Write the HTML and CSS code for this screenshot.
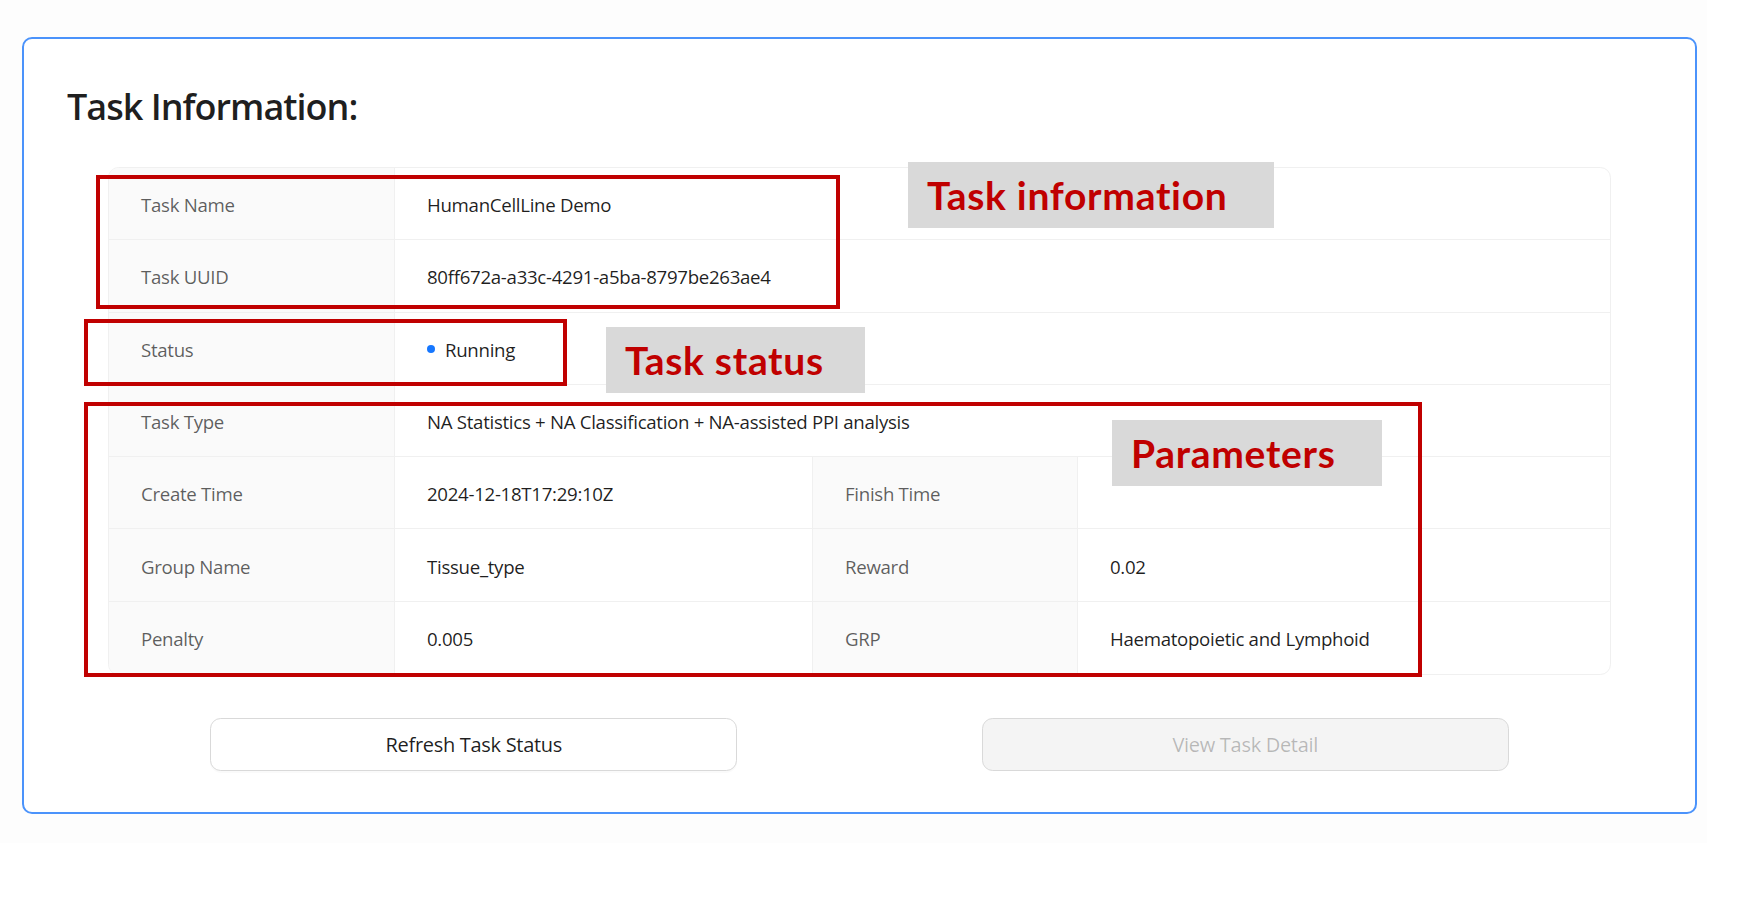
FILE: index.html
```html
<!DOCTYPE html>
<html lang="en">
<head>
<meta charset="utf-8">
<title>Task Information</title>
<link rel="stylesheet" href="styles.css">
</head>
<body>
<div class="page">
  <section class="card">
    <h2 class="title">Task Information:</h2>
    <div class="body">
      <div class="desc">
        <div class="cell label">Task Name</div>
        <div class="cell value span3 last">HumanCellLine Demo</div>
        <div class="cell label">Task UUID</div>
        <div class="cell value span3 last">80ff672a-a33c-4291-a5ba-8797be263ae4</div>
        <div class="cell label">Status</div>
        <div class="cell value span3 last"><span class="dot"></span>Running</div>
        <div class="cell label">Task Type</div>
        <div class="cell value span3 last">NA Statistics + NA Classification + NA-assisted PPI analysis</div>
        <div class="cell label">Create Time</div>
        <div class="cell value">2024-12-18T17:29:10Z</div>
        <div class="cell label">Finish Time</div>
        <div class="cell value last"></div>
        <div class="cell label">Group Name</div>
        <div class="cell value">Tissue_type</div>
        <div class="cell label">Reward</div>
        <div class="cell value last">0.02</div>
        <div class="cell label bottom">Penalty</div>
        <div class="cell value bottom">0.005</div>
        <div class="cell label bottom">GRP</div>
        <div class="cell value bottom last">Haematopoietic and Lymphoid</div>
      </div>
      <div class="actions">
        <div class="col"><button class="btn" type="button">Refresh Task Status</button></div>
        <div class="col"><button class="btn btn-disabled" type="button" disabled>View Task Detail</button></div>
      </div>
    </div>
  </section>

  <div class="mark mark-info"></div>
  <div class="mark mark-status"></div>
  <div class="mark mark-params"></div>
  <div class="tag tag-info">Task information</div>
  <div class="tag tag-status">Task status</div>
  <div class="tag tag-params">Parameters</div>
</div>
</body>
</html>
```

FILE: styles.css
```css
* { box-sizing: border-box; }

html, body {
  margin: 0;
  padding: 0;
  background: #ffffff;
}

body {
  font-family: "Open Sans", "Noto Sans", sans-serif;
  color: rgba(0, 0, 0, 0.88);
}

.page {
  position: relative;
  width: 1707px;
  height: 843px;
  padding: 37px 0 0 22px;
  background: #fdfdfd;
}

.card {
  width: 1675px;
  border: 2px solid #4b93fb;
  border-radius: 10px;
  background: #ffffff;
  padding: 44px 43px 41px 43px;
}

.title {
  margin: 0;
  font-size: 36px;
  line-height: 48px;
  font-weight: 600;
  letter-spacing: -1px;
  color: rgba(0, 0, 0, 0.88);
}

.body {
  margin: 36px 41px 0 41px;
}

.desc {
  display: grid;
  grid-template-columns: 286px 418px 265px 532px;
  grid-template-rows: repeat(7, 1fr);
  height: 508px;
  border: 1px solid #f0f0f0;
  border-radius: 10.67px;
  overflow: hidden;
}

.cell {
  display: flex;
  align-items: center;
  padding: 2px 32px 0 32px;
  font-size: 18.67px;
  letter-spacing: -0.3px;
  border-bottom: 1px solid #f0f0f0;
  border-right: 1px solid #f0f0f0;
  white-space: nowrap;
}

.cell.last { border-right: none; }
.cell.bottom { border-bottom: none; }

.span3 { grid-column: span 3; }

.label {
  background: #fafafa;
  color: rgba(0, 0, 0, 0.64);
}

.value {
  color: rgba(0, 0, 0, 0.88);
}

.dot {
  width: 8px;
  height: 8px;
  border-radius: 50%;
  background: #1677ff;
  margin-right: 10px;
  flex: none;
}

.actions {
  display: flex;
  margin: 43px -20px 0 -20px;
}

.col {
  flex: 1 1 0;
  display: flex;
  justify-content: center;
}

.btn {
  width: 527px;
  height: 53px;
  font-family: inherit;
  font-size: 20px;
  letter-spacing: -0.3px;
  color: rgba(0, 0, 0, 0.88);
  background: #ffffff;
  border: 1px solid #d9d9d9;
  border-radius: 10.67px;
  box-shadow: 0 2px 0 rgba(0, 0, 0, 0.02);
  padding: 0 20px;
}

.btn-disabled {
  background: #f4f4f4;
  color: rgba(0, 0, 0, 0.25);
  box-shadow: none;
}

/* annotation overlays */
.mark {
  position: absolute;
  border: 4px solid #c00000;
}

.mark-info   { left: 96px;  top: 175px; width: 744px;  height: 134px; }
.mark-status { left: 84px;  top: 319px; width: 483px;  height: 67px; }
.mark-params { left: 84px;  top: 402px; width: 1338px; height: 275px; }

.tag {
  position: absolute;
  height: 66px;
  line-height: 66px;
  padding-left: 19px;
  background: #d9d9d9;
  color: #c00000;
  font-family: "Lato", sans-serif;
  font-weight: 700;
  font-size: 39px;
  letter-spacing: 0.7px;
  white-space: nowrap;
}

.tag-info   { left: 908px;  top: 162px; width: 366px; }
.tag-status { left: 606px;  top: 327px; width: 259px; }
.tag-params { left: 1112px; top: 420px; width: 270px; }
```
